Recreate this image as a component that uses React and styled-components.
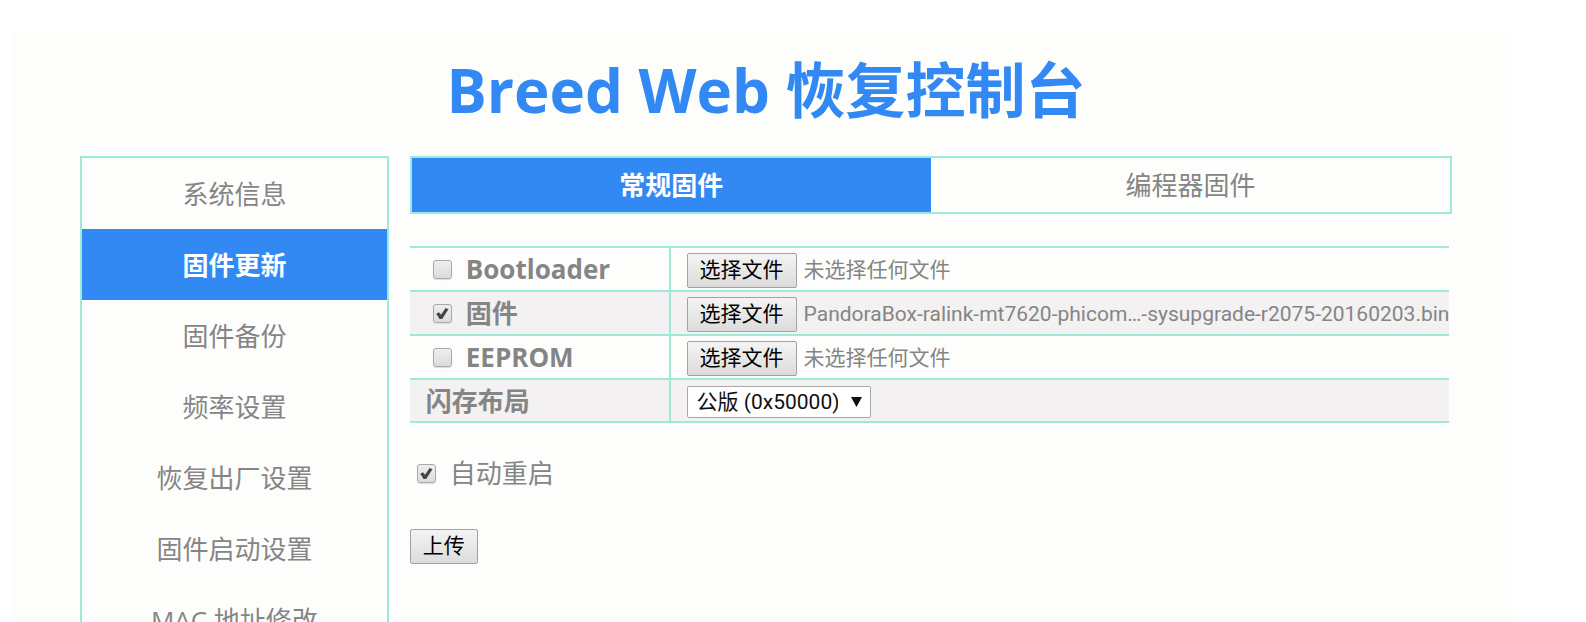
import React, { useId, useRef, useState } from 'react';
import styled, { createGlobalStyle, ThemeProvider } from 'styled-components';

const theme = {
  blue: '#3389f3',
  line: '#9cebda',
  panel: '#fdfefc',
  stripe: '#f3f1f2',
  text: '#858585',
  ui: '"Open Sans", "Noto Sans", "Noto Sans CJK SC", sans-serif',
  control: 'Roboto, "Liberation Sans", "Noto Sans CJK SC", sans-serif',
};

const GlobalStyle = createGlobalStyle`
  *, *::before, *::after { box-sizing: border-box; }
  body { margin: 0; background: #fff; }
`;

const Viewport = styled.div`
  height: 100vh;
  overflow: hidden auto;
  scrollbar-width: none;
  padding: 32px 74px 0 13px;
  color: ${(p) => p.theme.text};
  font: 26px/36px ${(p) => p.theme.ui};
`;

const Console = styled.div`
  background: ${(p) => p.theme.panel};
  padding: 16px 60px 32px 67px;
  min-height: 100%;
`;

const Title = styled.h1`
  margin: 0 0 24px;
  color: ${(p) => p.theme.blue};
  font-size: 60px;
  line-height: 84px;
  font-weight: 700;
  text-align: center;
`;

const Columns = styled.div`
  display: grid;
  grid-template-columns: minmax(240px, 8fr) 27fr;
  column-gap: 21px;
  align-items: start;
`;

const Menu = styled.nav`
  display: flex;
  flex-direction: column;
  border: 2px solid ${(p) => p.theme.line};
`;

const MenuLink = styled.a`
  height: 71px;
  display: flex;
  align-items: center;
  justify-content: center;
  text-decoration: none;
  color: ${(p) => (p.$active ? '#fff' : 'inherit')};
  background: ${(p) => (p.$active ? p.theme.blue : 'transparent')};
  font-weight: ${(p) => (p.$active ? 700 : 400)};
`;

const Content = styled.main`
  min-width: 0;
`;

const Tabs = styled.div`
  display: grid;
  grid-template-columns: 1fr 1fr;
  border: 2px solid ${(p) => p.theme.line};
`;

const Tab = styled.button`
  height: 54px;
  padding: 0;
  border: 0;
  font: inherit;
  cursor: pointer;
  color: ${(p) => (p.$active ? '#fff' : 'inherit')};
  background: ${(p) => (p.$active ? p.theme.blue : 'transparent')};
  font-weight: ${(p) => (p.$active ? 700 : 400)};
`;

const FirmwareTable = styled.table`
  width: calc(100% - 3px);
  margin-top: 32px;
  border-collapse: collapse;
  table-layout: fixed;
  border-top: 2px solid ${(p) => p.theme.line};
`;

const Row = styled.tr`
  height: ${(p) => (p.$compact ? 43 : 44)}px;
  border-bottom: 2px solid ${(p) => p.theme.line};
  background: ${(p) => (p.$striped ? p.theme.stripe : 'transparent')};
`;

const NameCell = styled.th`
  width: 25%;
  padding: 0 16px;
  text-align: left;
  font-weight: 700;
  border-right: 2px solid ${(p) => p.theme.line};
`;

const ValueCell = styled.td`
  padding: 0 0 0 16px;
`;

const CheckLabel = styled.label`
  display: flex;
  align-items: center;
  gap: 14px;
  padding-left: 7px;
`;

const CheckBox = styled.span`
  display: grid;
  flex: none;
  > * { grid-area: 1 / 1; }
  svg { pointer-events: none; visibility: hidden; }
  input:checked + svg { visibility: visible; }
`;

const CheckInput = styled.input`
  appearance: none;
  width: 19px;
  height: 19px;
  margin: 0;
  border: 1px solid #aaa;
  border-radius: 3px;
  background: linear-gradient(#eee, #dcdcdc);
  box-shadow: 0 1px 1px #ddd;
`;

const PushButton = styled.button`
  height: 35px;
  padding: 0 12px;
  border: 1px solid #a2a2a2;
  border-radius: 2px;
  background: linear-gradient(#f4f4f4, #dcdcdc);
  color: #000;
  font: 21px/28px ${(p) => p.theme.control};
  flex: none;
`;

const FilePicker = styled.div`
  display: flex;
  align-items: center;
  gap: 7px;
  padding-top: 2px;
`;

const FileName = styled.output`
  font: 21px/28px ${(p) => p.theme.control};
  white-space: nowrap;
`;

const SelectBox = styled.div`
  display: grid;
  width: fit-content;
  align-items: center;
  padding-top: 2px;
  > * { grid-area: 1 / 1; }
  svg { justify-self: end; margin-right: 9px; pointer-events: none; }
`;

const Select = styled.select`
  appearance: none;
  height: 32px;
  width: 184px;
  padding: 0 32px 0 9px;
  border: 1px solid #a9a9a9;
  border-radius: 2px;
  background: #fff;
  color: #111;
  font: 21px/28px ${(p) => p.theme.control};
`;

const RebootOption = styled.div`
  margin: 32px 0 34px;
`;

function Check(props) {
  return (
    <CheckBox>
      <CheckInput type="checkbox" {...props} />
      <svg width="19" height="19" viewBox="0 0 19 19" aria-hidden="true">
        <path d="M3.2 9.8 6 8.2 8 10.8 12.6 4 15.4 5.2 9.2 15H6.6Z" fill="#444" />
      </svg>
    </CheckBox>
  );
}

function FileField({ label, initial }) {
  const input = useRef(null);
  const [name, setName] = useState(initial);
  return (
    <FilePicker>
      <input
        ref={input}
        type="file"
        hidden
        aria-label={label}
        onChange={(e) => setName(e.target.files[0]?.name)}
      />
      <PushButton type="button" onClick={() => input.current.click()}>选择文件</PushButton>
      <FileName>{name || '未选择任何文件'}</FileName>
    </FilePicker>
  );
}

const menu = ['系统信息', '固件更新', '固件备份', '频率设置', '恢复出厂设置', '固件启动设置', 'MAC 地址修改'];
const tabs = ['常规固件', '编程器固件'];
const files = [
  { label: 'Bootloader' },
  { label: '固件', checked: true, file: 'PandoraBox-ralink-mt7620-phicom…-sysupgrade-r2075-20160203.bin' },
  { label: 'EEPROM' },
];

export default function App() {
  const [tab, setTab] = useState(0);
  const layoutId = useId();
  return (
    <ThemeProvider theme={theme}>
      <GlobalStyle />
      <Viewport lang="zh-CN">
        <Console>
          <Title>Breed Web 恢复控制台</Title>
          <Columns>
            <Menu>
              {menu.map((item, i) => (
                <MenuLink key={item} href="#" $active={i === 1}>{item}</MenuLink>
              ))}
            </Menu>
            <Content>
              <Tabs role="tablist">
                {tabs.map((item, i) => (
                  <Tab key={item} role="tab" aria-selected={tab === i} $active={tab === i} onClick={() => setTab(i)}>
                    {item}
                  </Tab>
                ))}
              </Tabs>
              <FirmwareTable>
                <tbody>
                  {files.map((f, i) => (
                    <Row key={f.label} $striped={i % 2 === 1}>
                      <NameCell scope="row">
                        <CheckLabel>
                          <Check defaultChecked={f.checked} />
                          {f.label}
                        </CheckLabel>
                      </NameCell>
                      <ValueCell><FileField label={f.label} initial={f.file} /></ValueCell>
                    </Row>
                  ))}
                  <Row $striped $compact>
                    <NameCell scope="row"><label htmlFor={layoutId}>闪存布局</label></NameCell>
                    <ValueCell>
                      <SelectBox>
                        <Select id={layoutId}>
                          <option>公版 (0x50000)</option>
                        </Select>
                        <svg width="11" height="10" viewBox="0 0 11 10" aria-hidden="true">
                          <path d="M0 0H11L5.5 10Z" fill="#111" />
                        </svg>
                      </SelectBox>
                    </ValueCell>
                  </Row>
                </tbody>
              </FirmwareTable>
              <RebootOption>
                <CheckLabel>
                  <Check defaultChecked />
                  自动重启
                </CheckLabel>
              </RebootOption>
              <PushButton type="submit">上传</PushButton>
            </Content>
          </Columns>
        </Console>
      </Viewport>
    </ThemeProvider>
  );
}
